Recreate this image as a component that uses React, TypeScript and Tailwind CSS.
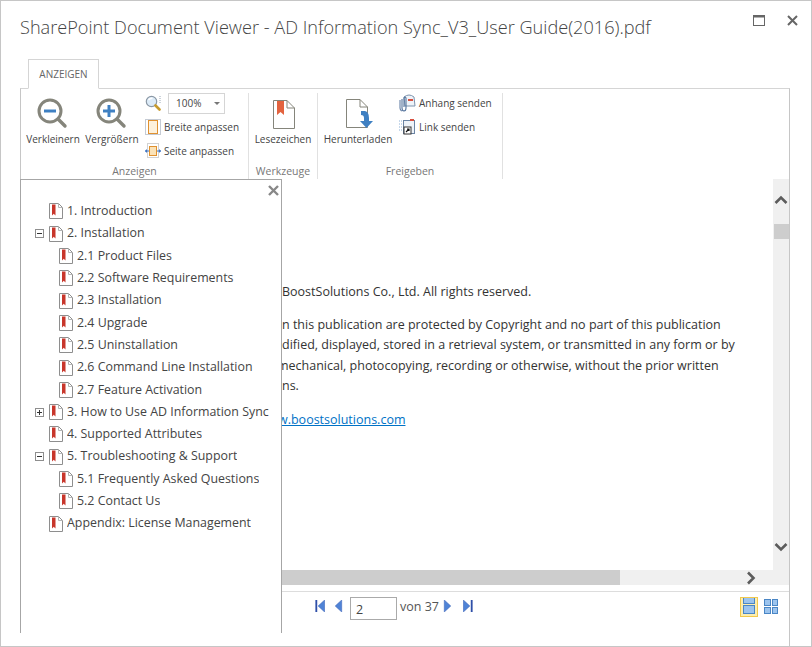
import type { ReactNode } from 'react'

const tree = [
  { label: '1. Introduction', indent: 0 },
  { label: '2. Installation', indent: 0, toggle: 'minus' },
  { label: '2.1 Product Files', indent: 1 },
  { label: '2.2 Software Requirements', indent: 1 },
  { label: '2.3 Installation', indent: 1 },
  { label: '2.4 Upgrade', indent: 1 },
  { label: '2.5 Uninstallation', indent: 1 },
  { label: '2.6 Command Line Installation', indent: 1 },
  { label: '2.7 Feature Activation', indent: 1 },
  { label: '3. How to Use AD Information Sync', indent: 0, toggle: 'plus' },
  { label: '4. Supported Attributes', indent: 0 },
  { label: '5. Troubleshooting & Support', indent: 0, toggle: 'minus' },
  { label: '5.1 Frequently Asked Questions', indent: 1 },
  { label: '5.2 Contact Us', indent: 1 },
  { label: 'Appendix: License Management', indent: 0 },
]

function Magnifier({ plus }: { plus?: boolean }) {
  return (
    <svg width="34" height="34" viewBox="0 0 34 34" fill="none">
      <circle cx="13" cy="13" r="11" fill="#fff" stroke="#85857b" strokeWidth="3" />
      <path d="M21 21 L28 28" stroke="#85857b" strokeWidth="3.4" strokeLinecap="round" />
      <path d="M7 13 H19" stroke="#3f80c2" strokeWidth="3" />
      {plus && <path d="M13 7 V19" stroke="#3f80c2" strokeWidth="3" />}
    </svg>
  )
}

function SmallMagnifier() {
  return (
    <svg width="16" height="17" viewBox="0 0 16 17" fill="none">
      <circle cx="6.5" cy="6.5" r="5.2" fill="#dcebf8" stroke="#8b98a5" strokeWidth="1.2" />
      <path d="M3.5 5 Q5 3 7.5 3.2" stroke="#fff" strokeWidth="1.4" />
      <path d="M10.5 10.5 L14.5 14.5" stroke="#c79a2c" strokeWidth="2.6" strokeLinecap="round" />
      <path d="M15 1 V8" stroke="#9aa7b5" strokeDasharray="1 1" />
    </svg>
  )
}

function FitWidth() {
  return (
    <svg width="16" height="16" viewBox="0 0 16 16" fill="none">
      <rect x="0.5" y="0.5" width="15" height="15" stroke="#8a97a8" strokeDasharray="1 1" />
      <rect x="3.5" y="1.5" width="9" height="13" fill="#fdf1dc" stroke="#e0912f" />
    </svg>
  )
}

function FitPage() {
  return (
    <svg width="16" height="16" viewBox="0 0 16 16" fill="none">
      <rect x="2.5" y="0.5" width="11" height="14" stroke="#a5a5a5" strokeDasharray="1 1" />
      <rect x="4.5" y="3.5" width="7" height="9" fill="#fbe3b8" stroke="#e0912f" />
      <path d="M0 8 H4 M12 8 H16" stroke="#3f74c2" />
      <path d="M0 8 L2 6 V10 Z M16 8 L14 6 V10 Z" fill="#3f74c2" />
    </svg>
  )
}

function PageOutline({ children }: { children: ReactNode }) {
  return (
    <svg width="28" height="30" viewBox="0 0 28 30" fill="none">
      <path d="M0.5 0.5 H14 L21.5 8 V28.5 H0.5 Z" fill="#fff" stroke="#85857b" />
      <path d="M14 0.5 V8 H21.5" stroke="#85857b" />
      {children}
    </svg>
  )
}

function PdfIcon() {
  return (
    <svg width="14" height="16" viewBox="0 0 14 16" fill="none">
      <path d="M0.5 0.5 H9.5 L13.5 4.5 V15.5 H0.5 Z" fill="#fff" stroke="#8e8e8e" />
      <path d="M9.5 0.5 V4.5 H13.5" stroke="#b5b5b5" />
      <path d="M3 1.5 H6.5 V12.5 L4.75 10.8 L3 12.5 Z" fill="#c8362b" />
    </svg>
  )
}

function Attach() {
  return (
    <svg width="17" height="18" viewBox="0 0 17 18" fill="none">
      <path d="M5 3 Q10 -1 15 3 L16 12 H6 Z" fill="#eef3f9" stroke="#7d93ad" />
      <rect x="9" y="5" width="5" height="2" fill="#d9503f" />
      <path d="M3 5 V14 Q3 17 5 17 Q7 17 7 14 V4 Q6 2 5 4 V13" stroke="#54739c" strokeWidth="1.1" />
      <path d="M1 6 V14 Q1 17 3 17" stroke="#54739c" />
    </svg>
  )
}

function LinkSend() {
  return (
    <svg width="17" height="18" viewBox="0 0 17 18" fill="none">
      <path d="M0 3 H3 M0 6 H3 M0 9 H3 M0 12 H3" stroke="#8cb0d6" strokeDasharray="1 1" />
      <rect x="4.5" y="2.5" width="11" height="13" fill="#eef3f9" stroke="#6b84a3" />
      <rect x="11" y="1" width="4" height="2" fill="#d9503f" />
      <rect x="5" y="9" width="7" height="7" fill="#fff" stroke="#333" />
      <path d="M7 14 L10 11 M8 11 H10 V13" stroke="#111" strokeWidth="1.2" />
    </svg>
  )
}

function Toggle({ type }: { type: string }) {
  return (
    <svg width="9" height="9" viewBox="0 0 9 9" fill="none">
      <rect x="0.5" y="0.5" width="8" height="8" fill="#fff" stroke="#8e8e8e" />
      <path d="M2 4.5 H7" stroke="#333" />
      {type === 'plus' && <path d="M4.5 2 V7" stroke="#333" />}
    </svg>
  )
}

function Chevron({ d }: { d: string }) {
  return (
    <svg width="14" height="14" viewBox="0 0 14 14" fill="none">
      <path d={d} stroke="#5c5c5c" strokeWidth="2.6" />
    </svg>
  )
}

function PagerIcon({ d, bar }: { d: string; bar?: string }) {
  return (
    <svg width="10" height="12" viewBox="0 0 10 13">
      <path d={d} fill="#4f83d6" stroke="#3c62b8" strokeWidth="0.6" />
      {bar && <path d={bar} stroke="#2f4fa8" strokeWidth="2" />}
    </svg>
  )
}

function GroupLabel({ children }: { children: ReactNode }) {
  return <div className="mt-auto text-center text-[10.5px] leading-[16px] text-[#777]">{children}</div>
}

export default function App() {
  return (
    <div
      className="flex h-[647px] w-[812px] flex-col overflow-hidden border border-[#c6c6c6] bg-white text-[#444]"
      style={{ fontFamily: '"Open Sans", "Noto Sans", sans-serif' }}
    >
      <div className="flex h-[58px] shrink-0 items-start justify-between pl-[19px] pr-[13px]">
        <h1 className="mt-[13px] whitespace-nowrap text-[18.15px] font-light leading-[26px] text-[#444]">
          SharePoint Document Viewer - AD Information Sync_V3_User Guide(2016).pdf
        </h1>
        <div className="mt-[14px] flex items-center gap-[22px]">
          <svg width="12" height="11" viewBox="0 0 12 11" fill="none">
            <rect x="0.5" y="0.5" width="11" height="10" stroke="#666" />
            <rect x="0" y="0" width="12" height="2.5" fill="#666" />
          </svg>
          <svg width="11" height="11" viewBox="0 0 11 11" fill="none">
            <path d="M1 1 L10 10 M10 1 L1 10" stroke="#666" strokeWidth="2" />
          </svg>
        </div>
      </div>

      <div className="flex shrink-0 pl-[27px]">
        <div className="z-10 -mb-px flex h-[30px] w-[71px] items-center justify-center border border-b-white border-[#d5d5d5] bg-white text-[10px] text-[#666]">
          ANZEIGEN
        </div>
      </div>

      <div className="ml-[19px] mr-[21px] flex h-[91px] shrink-0 border-x border-t border-x-[#c6c6c6] border-t-[#d5d5d5] pt-[4px] text-[10px] text-[#444]">
        <div className="flex w-[228px] flex-col border-r border-[#e1e1e1]">
          <div className="flex">
            <div className="ml-[5px] flex w-[54px] flex-col items-center">
              <div className="ml-[1px] mt-[5px] h-[34px]"><Magnifier /></div>
              <span className="-mt-[1px] leading-[16px]">Verkleinern</span>
            </div>
            <div className="ml-[5px] flex w-[54px] flex-col items-center">
              <div className="ml-[1px] mt-[5px] h-[34px]"><Magnifier plus /></div>
              <span className="-mt-[1px] leading-[16px]">Vergrößern</span>
            </div>
            <div className="ml-[6px] flex flex-col">
              <div className="flex h-[21px] items-center gap-[7px]">
                <SmallMagnifier />
                <div className="flex h-[21px] w-[57px] items-center justify-between border border-[#d5d5d5] pl-[7px] pr-[4px]">
                  <span>100%</span>
                  <span className="h-0 w-0 border-x-[3px] border-t-[3px] border-x-transparent border-t-[#777]" />
                </div>
              </div>
              <div className="mt-[5px] flex h-[16px] items-center gap-[3px] whitespace-nowrap"><FitWidth />Breite anpassen</div>
              <div className="mt-[8px] flex h-[16px] items-center gap-[3px] whitespace-nowrap"><FitPage />Seite anpassen</div>
            </div>
          </div>
          <GroupLabel>Anzeigen</GroupLabel>
        </div>

        <div className="flex w-[69px] flex-col border-r border-[#e1e1e1]">
          <div className="flex flex-col items-center">
            <div className="ml-[8px] mt-[7px] h-[30px]">
              <PageOutline>
                <path d="M4 1 H11 V15 L7.5 12 L4 15 Z" fill="#e3633f" />
              </PageOutline>
            </div>
            <span className="mt-[1px] leading-[16px]">Lesezeichen</span>
          </div>
          <GroupLabel>Werkzeuge</GroupLabel>
        </div>

        <div className="flex w-[185px] flex-col border-r border-[#e1e1e1]">
          <div className="flex">
            <div className="ml-[6px] flex w-[68px] flex-col items-center">
              <div className="ml-[4px] mt-[6px] h-[30px]">
                <PageOutline>
                  <path d="M15 12 H19 Q23 13 23 19 V22 H27 L20.5 29 L14 22 H18 V19 Q18 16 15 16 Z" fill="#3f80c2" />
                </PageOutline>
              </div>
              <span className="mt-[2px] whitespace-nowrap leading-[16px]">Herunterladen</span>
            </div>
            <div className="ml-[7px] flex flex-col">
              <div className="mt-[1px] flex h-[18px] items-center gap-[3px] whitespace-nowrap"><Attach />Anhang senden</div>
              <div className="mt-[6px] flex h-[18px] items-center gap-[3px] whitespace-nowrap"><LinkSend />Link senden</div>
            </div>
          </div>
          <GroupLabel>Freigeben</GroupLabel>
        </div>
      </div>

      <div className="ml-[19px] mr-[21px] flex min-h-0 flex-1">
        <aside className="h-[454px] w-[262px] shrink-0 border-x border-t border-[#a6a6a6] bg-white text-[12.4px] text-[#444]">
          <div className="flex h-[20.3px] items-center justify-end pr-[2px]">
            <svg width="11" height="11" viewBox="0 0 11 11" fill="none">
              <path d="M1 1 L10 10 M10 1 L1 10" stroke="#888" strokeWidth="2.4" />
            </svg>
          </div>
          {tree.map((item) => (
            <div
              key={item.label}
              className={`flex h-[22.3px] items-center overflow-hidden whitespace-nowrap ${item.indent ? 'pl-[24px]' : 'pl-[14px]'}`}
            >
              <span className="flex w-[14px] shrink-0 items-center">
                {item.toggle && <Toggle type={item.toggle} />}
              </span>
              <span className="mr-[4px] flex shrink-0"><PdfIcon /></span>
              <span className="mr-[11px] overflow-hidden">{item.label}</span>
            </div>
          ))}
        </aside>

        <div className="flex min-w-0 flex-1 flex-col border-r border-[#c6c6c6]">
          <div className="flex h-[391px]">
            <div className="flex-1 overflow-hidden whitespace-nowrap pt-[103px] text-[12.5px] leading-[20.5px] text-[#333]">
              <p>BoostSolutions Co., Ltd. All rights reserved.</p>
              <p className="mt-[12px]">n this publication are protected by Copyright and no part of this publication</p>
              <p>dified, displayed, stored in a retrieval system, or transmitted in any form or by</p>
              <p className="-ml-[5px]">mechanical, photocopying, recording or otherwise, without the prior written</p>
              <p>ns.</p>
              <p className="-ml-[4px] mt-[13px] text-[#0072c6] underline">w.boostsolutions.com</p>
            </div>
            <div className="flex w-[16px] flex-col items-center bg-[#f0f0f0] pt-[14px]">
              <Chevron d="M1.5 10 L7 4.5 L12.5 10" />
              <div className="ml-[1px] mt-[17px] h-[15px] w-[15px] bg-[#cdcdcd]" />
              <div className="mb-[16px] mt-auto"><Chevron d="M1.5 4 L7 9.5 L12.5 4" /></div>
            </div>
          </div>
          <div className="flex h-[15px] bg-[#f0f0f0]">
            <div className="w-[338px] bg-[#cdcdcd]" />
            <div className="ml-auto mr-[31px] flex items-center"><Chevron d="M4 1.5 L9.5 7 L4 12.5" /></div>
          </div>
          <div className="mt-[6px] flex h-[33px] items-start border-t border-[#ddd] pt-[5px]">
            <div className="ml-[33px] mt-[3px]"><PagerIcon d="M10 0 V13 L3 6.5 Z" bar="M1 0 V13" /></div>
            <div className="ml-[8px] mt-[3px]"><PagerIcon d="M9 0 V13 L2 6.5 Z" /></div>
            <input
              readOnly
              value="2"
              className="ml-[7px] h-[23px] w-[47px] border border-[#aaa] pl-[5px] pt-[2px] text-[12.5px] text-[#444] outline-none"
            />
            <span className="ml-[3px] mt-[1px] text-[12.5px] leading-[18px] text-[#555]">von 37</span>
            <div className="ml-[4px] mt-[3px]"><PagerIcon d="M1 0 V13 L8 6.5 Z" /></div>
            <div className="ml-[10px] mt-[3px]"><PagerIcon d="M0 0 V13 L7 6.5 Z" bar="M9 0 V13" /></div>
            <div className="ml-auto flex items-start">
              <div className="flex h-[20px] w-[18px] flex-col items-center gap-[1px] overflow-hidden border border-[#f2c94c] bg-[#fdeeb0]">
                <div className="h-[6px] w-[12px] shrink-0 border-x border-b border-[#4a86c5] bg-[#9cc4ee]" />
                <div className="h-[9px] w-[12px] shrink-0 border border-[#4a86c5] bg-[#9cc4ee]" />
              </div>
              <div className="ml-[6px] mr-[11px] mt-[2px] grid grid-cols-2 gap-[1px]">
                <div className="h-[7px] w-[6.5px] border border-[#4a86c5] bg-[#9cc4ee]" />
                <div className="h-[7px] w-[6.5px] border border-[#4a86c5] bg-[#9cc4ee]" />
                <div className="h-[7px] w-[6.5px] border border-[#4a86c5] bg-[#9cc4ee]" />
                <div className="h-[7px] w-[6.5px] border border-[#4a86c5] bg-[#9cc4ee]" />
              </div>
            </div>
          </div>
        </div>
      </div>
    </div>
  )
}
